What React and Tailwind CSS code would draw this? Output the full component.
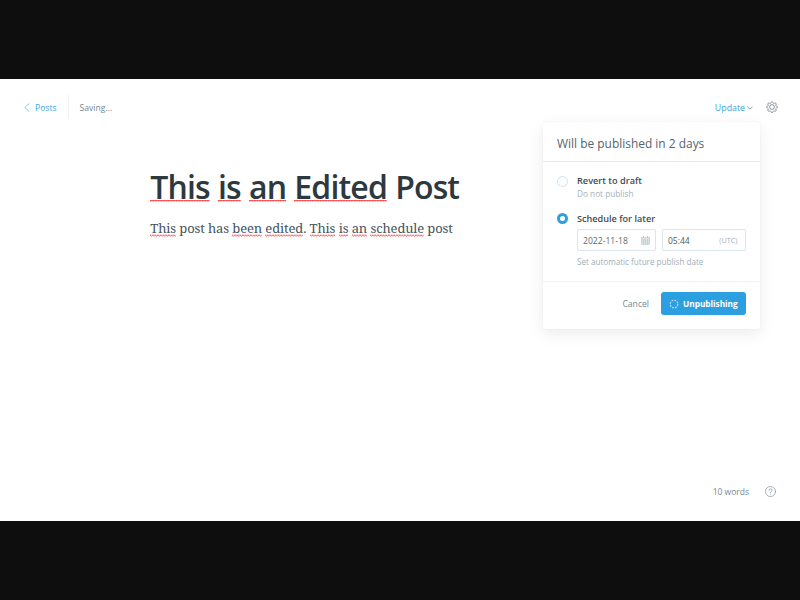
import { useId } from "react";

function Spell({ children, title = false }) {
  const id = useId().replace(/[^a-zA-Z0-9]/g, "");
  return (
    <span className="relative inline-block">
      {children}
      <svg
        className={title ? "absolute left-0 bottom-[7px] h-[2px] w-full" : "absolute left-0 bottom-[1px] h-[3px] w-full"}
        aria-hidden="true"
      >
        <defs>
          <pattern id={id} width={title ? 2.6 : 2.7} height="3" patternUnits="userSpaceOnUse">
            {title ? (
              <>
                <rect width="2.6" height="1.1" fill="#ff5a5a" />
                <rect width="1.3" height="1.4" fill="#ff4a4a" />
              </>
            ) : (
              <path d="M-.2 .5L1.35 2.2L2.9 .5" fill="none" stroke="#ff2f2f" strokeWidth=".9" />
            )}
          </pattern>
        </defs>
        <rect width="100%" height="3" fill={`url(#${id})`} />
      </svg>
    </span>
  );
}

function Gear() {
  return (
    <svg className="h-3 w-3" viewBox="0 0 24 24" fill="none" stroke="#6c7e88" strokeWidth="1.6">
      <circle cx="12" cy="12" r="4.8" />
      <path
        strokeLinejoin="round"
        d="M10.2 2.6a1.9 1.9 0 0 1 3.6 0l.3.9a1.9 1.9 0 0 0 2.6 1.1l.9-.4a1.9 1.9 0 0 1 2.5 2.5l-.4.9a1.9 1.9 0 0 0 1.1 2.6l.9.3a1.9 1.9 0 0 1 0 3.6l-.9.3a1.9 1.9 0 0 0-1.1 2.6l.4.9a1.9 1.9 0 0 1-2.5 2.5l-.9-.4a1.9 1.9 0 0 0-2.6 1.1l-.3.9a1.9 1.9 0 0 1-3.6 0l-.3-.9a1.9 1.9 0 0 0-2.6-1.1l-.9.4a1.9 1.9 0 0 1-2.5-2.5l.4-.9a1.9 1.9 0 0 0-1.1-2.6l-.9-.3a1.9 1.9 0 0 1 0-3.6l.9-.3a1.9 1.9 0 0 0 1.1-2.6l-.4-.9a1.9 1.9 0 0 1 2.5-2.5l.9.4a1.9 1.9 0 0 0 2.6-1.1z"
      />
    </svg>
  );
}

function Calendar() {
  return (
    <svg className="h-[9px] w-[9px]" viewBox="0 0 9 9" fill="none" stroke="#b9c4cb" strokeWidth=".6">
      <path fill="#e9eef1" d="M.5 1.5h8v7h-8z" />
      <path d="M.5 3.2h8M.5 5h8M.5 6.8h8M2.5 3.2v5.3M4.5 3.2v5.3M6.5 3.2v5.3" />
      <path d="M2.5 0v2M6.5 0v2" strokeWidth="1" />
    </svg>
  );
}

export default function App() {
  return (
    <div className="flex h-[600px] w-[800px] flex-col overflow-hidden bg-[#0e0e0e] font-['Open_Sans',sans-serif] text-[#738a94]">
      <div className="mt-[79px] flex h-[442px] flex-col bg-white">
        <header className="flex h-[43px] items-start justify-between pl-6 pr-[22px] pt-[16px]">
          <div className="flex h-6 items-center">
            <svg className="h-[9px] w-[6px]" viewBox="0 0 6 9" fill="none" stroke="#5cb5e8" strokeWidth=".7">
              <path d="M5.3 .5L.8 4.5L5.3 8.5" />
            </svg>
            <span className="ml-[5px] mt-0.5 w-[22px] whitespace-nowrap text-[8.6px] leading-3 text-[#3da5e0]">Posts</span>
            <span className="ml-[11px] h-6 w-px bg-[#eef1f3]" />
            <span className="ml-[10.5px] mt-0.5 text-[8.6px] leading-3">Saving...</span>
          </div>
          <div className="flex h-6 items-center">
            <span className="mt-0.5 text-[8.8px] leading-3 text-[#3da5e0]">Update</span>
            <svg className="ml-[2px] mt-0.5 h-[4px] w-[6px]" viewBox="0 0 6 4" fill="none" stroke="#738a94" strokeWidth=".8">
              <path d="M.4 .6L3 3.2L5.6 .6" />
            </svg>
            <span className="ml-[12.5px] mr-[0.5px]"><Gear /></span>
          </div>
        </header>

        <div className="flex flex-1 items-start">
          <main className="w-[393px] shrink-0 whitespace-nowrap pl-[0.3px] ml-[150px] pt-[43px]">
            <h1 className="h-[44px] text-[32px] font-semibold leading-[44px] tracking-[-0.85px] [word-spacing:0.7px] text-[#2d383f]">
              <Spell title>This</Spell> <Spell title>is</Spell> <Spell title>an</Spell> <Spell title>Edited</Spell> Post
            </h1>
            <p className="mt-[9px] h-5 font-['Noto_Serif',serif] text-[13px] leading-5 tracking-[-0.125px] text-[#46535a]">
              <Spell>This</Spell> post has <Spell>been</Spell> <Spell>edited</Spell>. <Spell>This</Spell> <Spell>is</Spell> <Spell>an</Spell>{" "}
              <Spell>schedule</Spell> post
            </p>
          </main>

          <section className="h-[207px] w-[216.5px] shrink-0 rounded-[3px] bg-white shadow-[0_0_2px_rgba(0,0,0,0.06),0_5px_16px_rgba(0,0,0,0.08)]">
            <h2 className="flex h-10 items-center border-b border-[#e1ebf1] pl-[14px] pt-[5px] text-[11.95px] text-[#56646d]">
              Will be published in 2 days
            </h2>
            <div className="flex h-[120px] flex-col border-b border-[#edf2f5] pl-[13.5px] pr-[13.5px] pt-[13px]">
              <div className="flex gap-[9.5px]">
                <span className="mt-[0.5px] h-[11px] w-[11px] shrink-0 rounded-full border border-[#cfe3f0]" />
                <div>
                  <div className="text-[9.2px] font-semibold leading-3 text-[#3f4c54]">Revert to draft</div>
                  <div className="mt-px text-[8.25px] leading-3 text-[#a5b2ba]">Do not publish</div>
                </div>
              </div>
              <div className="mt-[13px] flex gap-[9.5px]">
                <span className="h-[11px] w-[11px] shrink-0 rounded-full border-[3px] border-[#2f9fe0] bg-white" />
                <div className="w-[169px]">
                  <div className="text-[9.15px] font-semibold leading-3 text-[#3f4c54]">Schedule for later</div>
                  <div className="mt-[4px] flex gap-[6px]">
                    <div className="flex h-[22px] w-[79px] items-center justify-between rounded-[2px] border border-[#dae5ec] pl-[5px] pr-[5px] text-[8.6px] text-[#5b6a73]">
                      <span className="pt-[3px]">2022-11-18</span>
                      <Calendar />
                    </div>
                    <div className="flex h-[22px] w-[84px] items-center justify-between rounded-[2px] border border-[#dae5ec] pl-[5px] pr-[7.5px] text-[8.5px] text-[#4c5a63]">
                      <span className="pt-[3px]">05:44</span>
                      <span className="text-[7.3px] text-[#a5b2ba]">(UTC)</span>
                    </div>
                  </div>
                  <div className="mt-[5px] text-[8.1px] leading-3 text-[#a0aeb6]">Set automatic future publish date</div>
                </div>
              </div>
            </div>
            <div className="flex items-center justify-end gap-3 pr-[13.5px] pt-[10px]">
              <span className="text-[8.6px] leading-3 text-[#738a94]">Cancel</span>
              <div className="flex h-[23px] w-[85px] items-center rounded-[3px] bg-[#2c9fe0] pl-2 text-white">
                <svg className="h-[10px] w-[10px]" viewBox="0 0 10 10" fill="none" stroke="#bfe2f7" strokeWidth="1.2">
                  <circle cx="5" cy="5" r="3.8" strokeDasharray="1.75 1.235" />
                </svg>
                <span className="ml-1 text-[8.25px] font-bold leading-3">Unpublishing</span>
              </div>
            </div>
          </section>
        </div>

        <footer className="flex h-[58px] items-start justify-end pr-6">
          <div className="flex h-[57px] items-center">
            <span className="mt-px text-[8.5px] leading-3">10 words</span>
            <svg className="ml-4 h-[11px] w-[11px]" viewBox="0 0 24 24" fill="none" stroke="#84959f" strokeWidth="1.6" strokeLinecap="round">
              <circle cx="12" cy="12" r="11" />
              <path d="M8.8 9.4a3.3 3.3 0 1 1 4.8 3c-1.1.6-1.6 1.2-1.6 2.3M12 17.6v.3" />
            </svg>
          </div>
        </footer>
      </div>
    </div>
  );
}
